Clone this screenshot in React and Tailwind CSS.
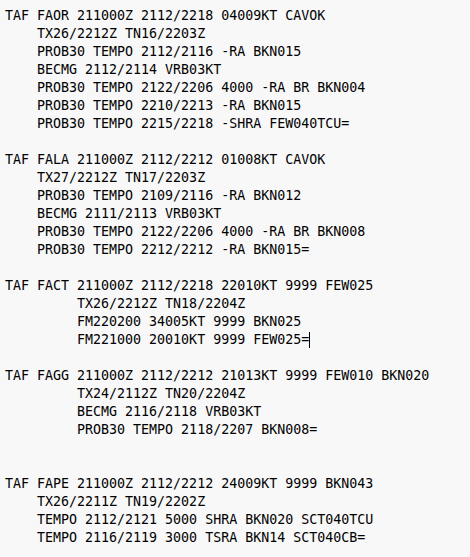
import React from 'react';

const reports = [
  {
    lines: [
      'TAF FAOR 211000Z 2112/2218 04009KT CAVOK',
      '    TX26/2212Z TN16/2203Z',
      '    PROB30 TEMPO 2112/2116 -RA BKN015',
      '    BECMG 2112/2114 VRB03KT',
      '    PROB30 TEMPO 2122/2206 4000 -RA BR BKN004',
      '    PROB30 TEMPO 2210/2213 -RA BKN015',
      '    PROB30 TEMPO 2215/2218 -SHRA FEW040TCU=',
    ],
  },
  {
    lines: [
      'TAF FALA 211000Z 2112/2212 01008KT CAVOK',
      '    TX27/2212Z TN17/2203Z',
      '    PROB30 TEMPO 2109/2116 -RA BKN012',
      '    BECMG 2111/2113 VRB03KT',
      '    PROB30 TEMPO 2122/2206 4000 -RA BR BKN008',
      '    PROB30 TEMPO 2212/2212 -RA BKN015=',
    ],
  },
  {
    lines: [
      'TAF FACT 211000Z 2112/2218 22010KT 9999 FEW025',
      '         TX26/2212Z TN18/2204Z',
      '         FM220200 34005KT 9999 BKN025',
      '         FM221000 20010KT 9999 FEW025=',
    ],
    caret: true,
  },
  {
    lines: [
      'TAF FAGG 211000Z 2112/2212 21013KT 9999 FEW010 BKN020',
      '         TX24/2112Z TN20/2204Z',
      '         BECMG 2116/2118 VRB03KT',
      '         PROB30 TEMPO 2118/2207 BKN008=',
    ],
    gapAfter: 2,
  },
  {
    lines: [
      'TAF FAPE 211000Z 2112/2212 24009KT 9999 BKN043',
      '    TX26/2211Z TN19/2202Z',
      '    TEMPO 2112/2121 5000 SHRA BKN020 SCT040TCU',
      '    TEMPO 2116/2119 3000 TSRA BKN14 SCT040CB=',
    ],
  },
];

export default function App() {
  return (
    <div className="w-[470px] h-[557px] overflow-hidden bg-[#f8f8f8] text-black">
      <div className="pt-[7px] pl-[5px] font-['DejaVu_Sans_Mono',monospace] text-[13.3px] leading-[18px] whitespace-pre">
        {reports.map((r, i) => (
          <div key={i} className={r.gapAfter === 2 ? 'mb-[36px]' : 'mb-[18px]'}>
            {r.lines.map((line, j) => (
              <div key={j} className="h-[18px]">
                {line}
                {r.caret && j === r.lines.length - 1 && (
                  <span className="inline-block w-px h-[16px] bg-black align-[-4px]"></span>
                )}
              </div>
            ))}
          </div>
        ))}
      </div>
    </div>
  );
}
